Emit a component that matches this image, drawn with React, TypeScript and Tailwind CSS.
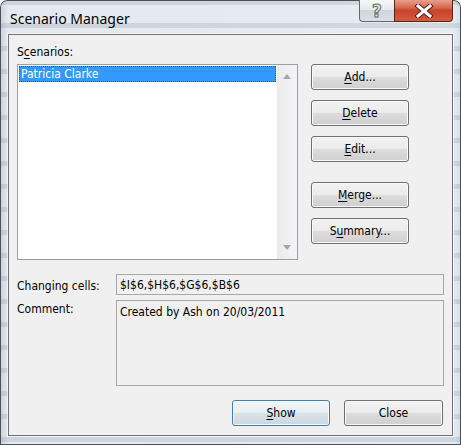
import React from "react";

const ui =
  "font-['DejaVu_Sans_Condensed','DejaVu_Sans',sans-serif] font-stretch-condensed text-[12px] leading-[14px] text-black";

function Key({ children }: { children: React.ReactNode }) {
  return <span className="underline underline-offset-2">{children}</span>;
}

function Btn({
  children,
  primary,
  className = "",
}: {
  children: React.ReactNode;
  primary?: boolean;
  className?: string;
}) {
  const look = primary
    ? "border-[#3c7fb1] bg-[linear-gradient(#f1f5f8_0%,#e8eef2_50%,#d9e2e8_50%,#ccd7de_100%)]"
    : "border-[#707070] bg-[linear-gradient(#f2f2f2_0%,#ebebeb_50%,#dddddd_50%,#cfcfcf_100%)]";
  return (
    <button
      className={`h-[26px] rounded-[3px] border ${look} shadow-[inset_0_0_0_1px_#fbfbfb] flex items-center justify-center ${ui} ${className}`}
    >
      {children}
    </button>
  );
}

function Arrow({ up }: { up?: boolean }) {
  return (
    <svg width="8" height="5" viewBox="0 0 8 5">
      <path d={up ? "M0 5 L4 0 L8 5 Z" : "M0 0 L4 5 L8 0 Z"} fill="#a6a6a6" />
    </svg>
  );
}

function CaptionButtons() {
  return (
    <div className="ml-auto flex h-[22px]">
      <div className="w-[35px] h-full rounded-bl-[4px] border border-r-0 border-t-0 border-[#5f6a75] bg-[linear-gradient(#f6f8fa_0%,#e3e9ef_45%,#cdd5dd_50%,#d9e0e7_100%)] flex items-center justify-center">
        <span className="font-['DejaVu_Sans',sans-serif] font-bold text-[17px] leading-none text-[#e9e9e9] [-webkit-text-stroke:1px_#6a6a6a] mt-[1px]">
          ?
        </span>
      </div>
      <div className="w-[59px] h-full rounded-br-[4px] border border-t-0 border-[#5a2418] bg-[linear-gradient(#e8a08e_0%,#d86a52_35%,#c8432b_50%,#d65a3e_100%)] flex items-center justify-center">
        <svg width="20" height="14" viewBox="0 0 20 14">
          <g strokeLinecap="square">
            <path d="M4 2 L16 12 M16 2 L4 12" stroke="#4a2018" strokeWidth="5" />
            <path d="M4 2 L16 12 M16 2 L4 12" stroke="#ffffff" strokeWidth="3" />
          </g>
        </svg>
      </div>
    </div>
  );
}

export default function App() {
  return (
    <div className="w-[461px] h-[445px] rounded-t-[7px] shadow-[inset_0_0_0_1px_#4d5258] px-[8px] pb-[9px] flex flex-col bg-[repeating-linear-gradient(180deg,rgba(120,130,140,0.2)_0_5px,transparent_5px_23px),linear-gradient(90deg,#c9d2db_0px,#e3e9ef_8px,#e6ecf2_453px,#d4dee8_461px)]">
      {/* title bar */}
      <div className="h-[34px] flex items-start pl-[2px]">
        <span className="mt-[9px] font-['Noto_Sans',sans-serif] text-[14px] leading-[20px] text-black">
          Scenario Manager
        </span>
        <CaptionButtons />
      </div>

      {/* client area */}
      <div
        className={`flex-1 border border-[#6e7479] shadow-[0_0_0_1px_rgba(255,255,255,0.55)] bg-[#f0f0f0] pt-[10px] pl-[8px] pr-[8px] pb-[9px] flex flex-col ${ui}`}
      >
        <div className="flex">
          <div className="w-[281px] flex flex-col">
            <div className="h-[14px] mb-[5px]">
              S<Key>c</Key>enarios:
            </div>
            <div className="h-[196px] border border-[#9a9fa5] bg-white flex">
              <div className="flex-1 pt-[1px] pl-[1px] pr-[1px]">
                <div className="h-[16px] bg-[#3399ff] border border-dotted border-[#2a5c8c] text-white pl-[1px] leading-[14px]">
                  Patricia Clarke
                </div>
              </div>
              <div className="w-[20px] bg-[linear-gradient(90deg,#ebebeb,#f4f4f4)] flex flex-col items-center justify-between py-[9px]">
                <Arrow up />
                <Arrow />
              </div>
            </div>
          </div>
          <div className="ml-[13px] w-[98px] pt-[19px] flex flex-col">
            <Btn>
              <Key>A</Key>dd...
            </Btn>
            <Btn className="mt-[10px]">
              <Key>D</Key>elete
            </Btn>
            <Btn className="mt-[10px]">
              <Key>E</Key>dit...
            </Btn>
            <Btn className="mt-[20px]">
              <Key>M</Key>erge...
            </Btn>
            <Btn className="mt-[10px]">
              S<Key>u</Key>mmary...
            </Btn>
          </div>
        </div>

        <div className="flex mt-[14px]">
          <div className="w-[99px] pt-[5px]">Changing cells:</div>
          <div className="flex-1 h-[21px] border border-[#a5a9ad] pl-[3px] pt-[3px]">
            $I$6,$H$6,$G$6,$B$6
          </div>
        </div>

        <div className="flex mt-[5px]">
          <div className="w-[99px] pt-[2px]">Comment:</div>
          <div className="flex-1 h-[86px] border border-[#a5a9ad] pl-[3px] pt-[4px]">
            Created by Ash on 20/03/2011
          </div>
        </div>

        <div className="flex justify-end mt-[14px] pr-[1px]">
          <Btn primary className="w-[98px]">
            <Key>S</Key>how
          </Btn>
          <Btn className="w-[99px] ml-[14px]">Close</Btn>
        </div>
      </div>
    </div>
  );
}
